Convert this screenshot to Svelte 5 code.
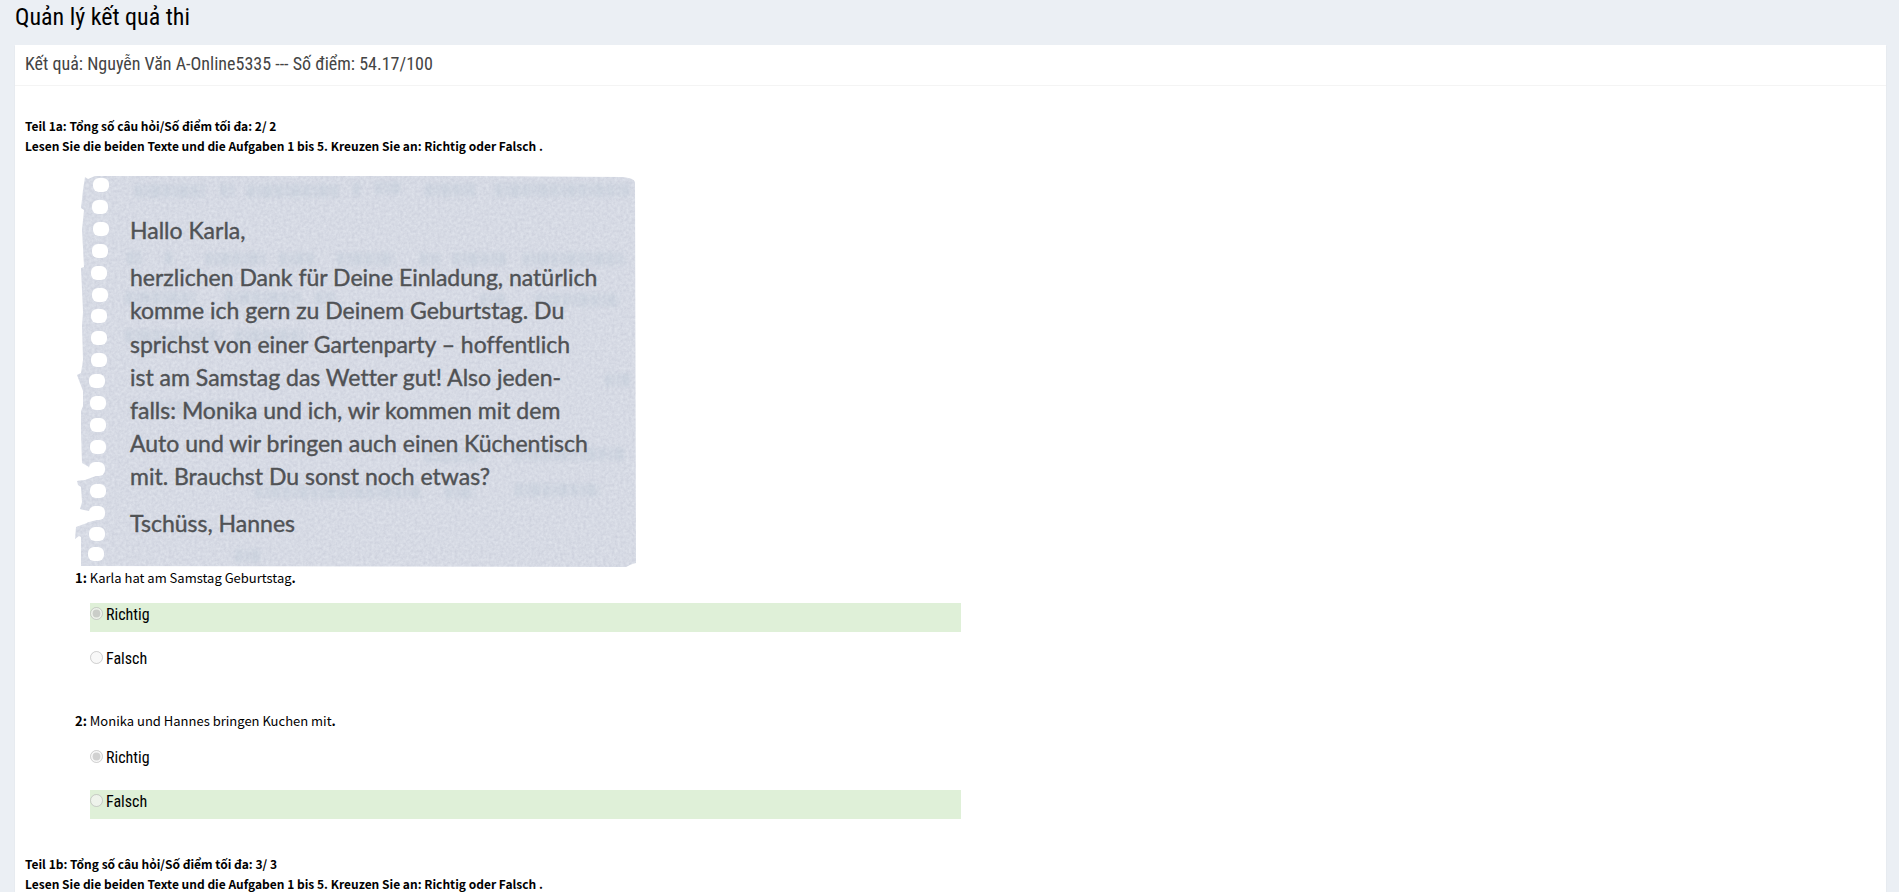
<script lang="ts">
  interface Question {
    no: number
    text: string
    answers: string[]
    chosen: number
    correct: number
  }

  interface Part {
    name: string
    total: string
    letter?: boolean
    questions: Question[]
  }

  const instruction =
    'Lesen Sie die beiden Texte und die Aufgaben 1 bis 5. Kreuzen Sie an: Richtig oder Falsch .'

  const parts: Part[] = [
    {
      name: 'Teil 1a',
      total: '2/ 2',
      letter: true,
      questions: [
        { no: 1, text: 'Karla hat am Samstag Geburtstag', answers: ['Richtig', 'Falsch'], chosen: 0, correct: 0 },
        { no: 2, text: 'Monika und Hannes bringen Kuchen mit', answers: ['Richtig', 'Falsch'], chosen: 0, correct: 1 }
      ]
    },
    { name: 'Teil 1b', total: '3/ 3', questions: [] }
  ]

  const letterLines = [
    { y: 63, text: 'Hallo Karla,' },
    { y: 110, text: 'herzlichen Dank für Deine Einladung, natürlich' },
    { y: 143, text: 'komme ich gern zu Deinem Geburtstag. Du' },
    { y: 177, text: 'sprichst von einer Gartenparty – hoffentlich' },
    { y: 210, text: 'ist am Samstag das Wetter gut! Also jeden-' },
    { y: 243, text: 'falls: Monika und ich, wir kommen mit dem' },
    { y: 276, text: 'Auto und wir bringen auch einen Küchentisch' },
    { y: 309, text: 'mit. Brauchst Du sonst noch etwas?' },
    { y: 356, text: 'Tschüss, Hannes' }
  ]

  // punched holes along the torn edge: [x, y]
  const holes = [
    [26, 9], [25, 31], [26, 53], [25, 75], [24, 97], [25, 119], [24, 140], [24, 162], [24, 184],
    [22, 205], [23, 227], [23, 249], [23, 271], [22, 293], [23, 315], [22, 337], [22, 358], [21, 378]
  ]
</script>

<main>
  <h1>Quản lý kết quả thi</h1>

  <section class="box">
    <header class="box-header">
      <h2>Kết quả: Nguyễn Văn A-Online5335 --- Số điểm: 54.17/100</h2>
    </header>

    <div class="box-body">
      {#each parts as part}
        <section class="part">
          <h3>{part.name}: Tổng số câu hỏi/Số điểm tối đa: {part.total}</h3>
          <p class="instruction">{instruction}</p>

          <div class="content">
            {#if part.letter}
              <svg class="letter" viewBox="0 0 561 392" width="561" height="392">
                <defs>
                  <filter id="grain" x="0" y="0" width="100%" height="100%" color-interpolation-filters="sRGB">
                    <feTurbulence type="fractalNoise" baseFrequency="0.35" numOctaves="3" seed="4" />
                    <feColorMatrix values="0.1 0 0 0 0.79  0.1 0 0 0 0.805  0.08 0 0 0 0.855  0 0 0 0 1" />
                    <feComposite in2="SourceGraphic" operator="in" />
                  </filter>
                  <filter id="soft"><feGaussianBlur stdDeviation="2" /></filter>
                </defs>
                <path
                  filter="url(#grain)"
                  d="M10 1 L13 3 L20 0 L400 0 L547 1 Q559 2 560 6 L561 387 Q556 388 551 391 L6 390 L6 361 L4 360 L0 363
                    L1 351 L12 347 L14 342 L5 333 L7 326 L6 311 L3 309 L2 305 L12 297 L14 291 L7 287 L6 257 L6 235 L8 230
                    L8 215 L2 199 L6 197 L8 184 L7 150 L8 136 L6 92 L9 91 L8 72 L7 54 L9 34 L6 32 L8 14 Z"
                />
                <g class="ghost" filter="url(#soft)">
                  <path d="M60 15 H130 M145 14 H160 M172 15 H264 M278 13 H288 M300 12 H326 M350 14 H400 M420 14 H554" />
                  <path d="M52 82 H66 M90 82 H98 M130 83 H190 M204 83 H240 M262 83 H320 M345 83 H365 M378 83 H432 M448 83 H550" />
                  <path d="M50 122 H120 M150 122 H226 M240 122 H260 M405 124 H430 M460 124 H545 M50 160 H146 M160 160 H230" />
                  <path d="M530 204 H555 M55 232 H160 M350 280 H405 M440 278 H550 M180 316 H345 M370 316 H400 M440 314 H525 M160 380 H185" />
                </g>
                <g class="holes">
                  {#each holes as [x, y]}
                    <rect x={x - 8} y={y - 7} width="16" height="14" rx="6" />
                  {/each}
                  <path d="M0 305 L13 292 L21 286 V300 L10 304 Z M4 333 L14 335 L22 330 V344 L10 347 L2 350 Z" />
                </g>
                <g class="handwriting">
                  {#each letterLines as line}
                    <text x="55" y={line.y}>{line.text}</text>
                  {/each}
                </g>
              </svg>
            {/if}

            {#each part.questions as question}
              <fieldset>
                <legend><b>{question.no}:</b> {question.text}<b>.</b></legend>
                <div class="answers">
                  {#each question.answers as answer, i}
                    <label class:correct={i === question.correct}>
                      <input type="radio" name="question-{question.no}" checked={i === question.chosen} disabled />
                      <span>{answer}</span>
                    </label>
                  {/each}
                </div>
              </fieldset>
            {/each}
          </div>
        </section>
      {/each}
    </div>
  </section>
</main>

<style>
  :global(body) {
    background: #ebeff4;
  }

  main {
    box-sizing: border-box;
    height: 100vh;
    overflow: hidden;
    padding: 0 13px 0 15px;
    color: #000;
    font-family: 'Roboto Condensed', 'Liberation Sans Narrow', Roboto, sans-serif;
  }

  h1,
  h2,
  h3,
  p {
    margin: 0;
    font-weight: 400;
  }

  h1 {
    padding-bottom: 10px;
    font-size: 24px;
    line-height: 35px;
  }

  .box {
    background: #fff;
    box-shadow: 0 1px 1px rgba(0, 0, 0, 0.1);
  }

  .box-header {
    padding: 9px 10px 11px;
    border-bottom: 1px solid #f4f4f4;
    color: #444;
  }

  h2 {
    font-size: 18px;
    line-height: 20px;
  }

  .box-body {
    padding: 30px 10px 10px;
  }

  h3,
  .instruction,
  legend {
    font-family: 'Source Sans Pro', 'Noto Sans CJK SC', sans-serif;
    font-size: 12px;
    line-height: 20px;
  }

  h3,
  .instruction {
    font-weight: 700;
  }

  .part {
    margin-bottom: 26px;
  }

  .content {
    padding: 20px 0 0 50px;
  }

  .letter {
    display: block;
    max-width: 100%;
    height: auto;
  }

  .ghost {
    fill: none;
    stroke: #b4c2d0;
    stroke-width: 13;
    stroke-dasharray: 7 3 4 2 9 3;
    opacity: 0.3;
  }

  .holes {
    fill: #fff;
  }

  .handwriting {
    fill: #505255;
    stroke: #505255;
    stroke-width: 0.4px;
    font-family: Lato, sans-serif;
    font-size: 23px;
    font-variant-ligatures: none;
  }

  fieldset {
    min-width: 0;
    margin: 0 0 35px;
    padding: 0;
    border: 0;
  }

  legend {
    padding: 0;
    font-size: 13px;
  }

  .answers {
    display: grid;
    gap: 15px;
    box-sizing: border-box;
    width: 50%;
    padding: 15px 15px 0;
  }

  label {
    display: flex;
    align-items: flex-start;
    gap: 3px;
    height: 29px;
    font-size: 16px;
    line-height: 23px;
  }

  .correct {
    background: #dff0d8;
  }

  input {
    width: 13px;
    height: 13px;
    margin: 4px 0 0;
  }
</style>
